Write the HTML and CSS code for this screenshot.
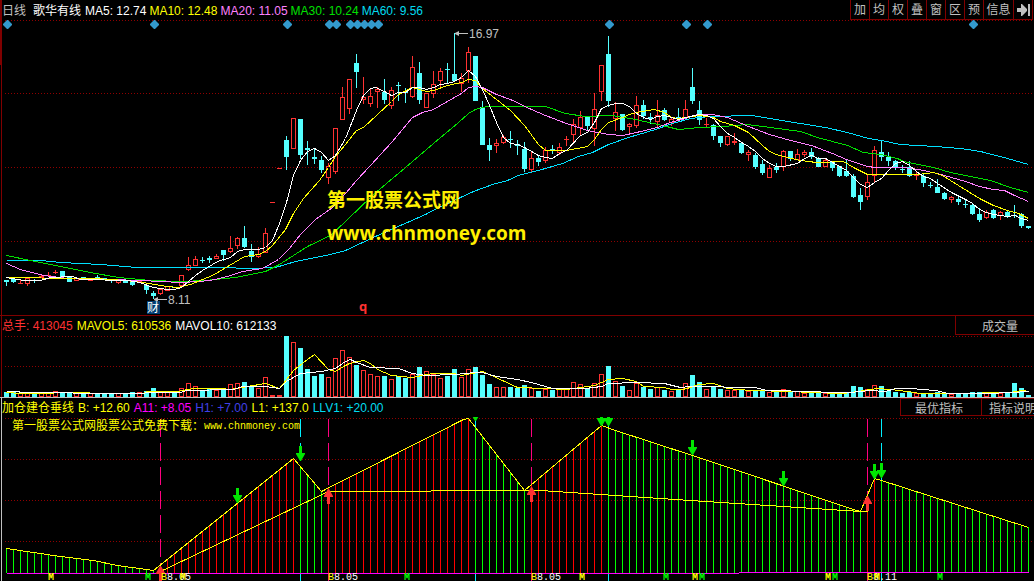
FILE: index.html
```html
<!DOCTYPE html>
<html lang="zh-CN">
<head>
<meta charset="utf-8">
<meta name="viewport" content="width=device-width, initial-scale=1">
<title>歌华有线 日线</title>
<link rel="stylesheet" href="styles.css">
</head>
<body>
<main class="terminal">
  <section class="panel panel-price">
    <header class="bar bar-price">
      <div class="legend">
        <span class="period">日线</span>
        <h1 class="stock white">歌华有线</h1>
        <span class="white">MA5: 12.74</span>
        <span class="yellow">MA10: 12.48</span>
        <span class="violet">MA20: 11.05</span>
        <span class="green">MA30: 10.24</span>
        <span class="cyan">MA60: 9.56</span>
      </div>
      <nav class="tools">
        <button type="button">加</button>
        <button type="button">均</button>
        <button type="button">权</button>
        <button type="button">叠</button>
        <button type="button">窗</button>
        <button type="button">区</button>
        <button type="button">预</button>
        <button type="button" class="wide">信息</button>
        <button type="button" aria-label="移到最后">
          <svg class="icon" viewBox="0 0 13 12" width="13" height="12"><path d="M0 4H4V0H5L10 5V7L5 12H4V8H0Z M11 0H13V12H11Z" fill="currentColor"/></svg>
        </button>
      </nav>
    </header>
    <svg class="chart" id="price" viewBox="0 20 1034 295" role="img" aria-label="K线图"></svg>
  </section>

  <section class="panel panel-volume">
    <header class="bar bar-volume">
      <div class="legend">
        <span class="red">总手: 413045</span>
        <span class="yellow">MAVOL5: 610536</span>
        <span class="white">MAVOL10: 612133</span>
      </div>
      <button type="button" class="tab tab-volume">成交量</button>
    </header>
    <svg class="chart" id="volume" viewBox="0 336 1034 61" role="img" aria-label="成交量图"></svg>
  </section>

  <section class="panel panel-signal">
    <header class="bar bar-signal">
      <div class="legend">
        <span class="yellow">加仓建仓垂线</span>
        <span class="yellow">B: +12.60</span>
        <span class="magenta">A11: +8.05</span>
        <span class="blue">H1: +7.00</span>
        <span class="yellow">L1: +137.0</span>
        <span class="cyan">LLV1: +20.00</span>
      </div>
      <div class="tabs">
        <button type="button" class="tab tab-best">最优指标</button>
        <button type="button" class="tab tab-help">指标说明</button>
      </div>
    </header>
    <svg class="chart" id="signal" viewBox="0 416 1034 165" role="img" aria-label="加仓建仓垂线图"></svg>
  </section>
</main>
<script src="chart.js"></script>
</body>
</html>
```

FILE: styles.css
```css
* { box-sizing: border-box; }

body {
  margin: 0;
  background: #000;
  color: #c0c0c0;
  font: 12px/18px "Liberation Sans", "Noto Sans CJK SC", sans-serif;
  overflow-x: hidden;
}

.terminal { display: flex; flex-direction: column; }

.panel { position: relative; overflow: hidden; }

.panel::before {
  content: "";
  position: absolute;
  left: 1px;
  top: 0;
  bottom: 0;
  width: 1px;
  background: #800000;
}

.panel-price::after {
  content: "";
  position: absolute;
  left: 0;
  top: 0;
  width: 1px;
  height: 65px;
  background: #800000;
}

.panel-price { border-bottom: 1px solid #800000; }
.panel-volume { border-bottom: 1px solid #c0c0c0; }
.panel-signal::before { background: #c0c0c0; }

.bar {
  display: flex;
  justify-content: space-between;
  white-space: nowrap;
}

.bar-price, .bar-volume { height: 20px; }
.bar-signal { height: 18px; }

.legend {
  display: flex;
  align-items: center;
  gap: 4px;
  padding-left: 2px;
}

.bar-price .legend { gap: 3px; padding-top: 1px; }
.bar-signal .legend { padding-top: 2px; }

.period { margin-right: 4px; }
.stock { margin: 0 1px 0 0; font: inherit; }

.white { color: #fff; }
.yellow { color: #ffff00; }
.violet { color: #ff80ff; }
.green { color: #00e000; }
.cyan { color: #00dcf0; }
.red { color: #ff3232; }
.magenta { color: #ff00ff; }
.blue { color: #4040e8; }

button {
  margin: 0;
  padding: 0;
  border: 0 solid #800000;
  background: #000;
  color: #c0c0c0;
  font: inherit;
  cursor: pointer;
}

.tools {
  display: flex;
  border-right: 1px solid #800000;
  margin-right: 1px;
}

.tools button {
  display: flex;
  align-items: center;
  justify-content: center;
  width: 19px;
  padding-top: 1px;
  border-width: 0 0 1px 1px;
}

.tools .wide { width: 30px; }

.tabs { display: flex; }

.tab-volume {
  width: 79px;
  height: 19px;
  padding: 2px 0 0 10px;
  border-width: 0 0 1px 1px;
}

.tab-best { width: 82px; border-width: 1px; padding: 1px 4px 0 0; }
.tab-help { width: 52px; padding: 1px 0 0 7px; border-width: 1px 0; text-align: left; overflow: hidden; }

.chart { display: block; width: 100%; height: auto; }
.chart text { font-family: "Liberation Sans", "Noto Sans CJK SC", sans-serif; font-size: 12px; }
.chart .watermark { font-family: "Noto Sans CJK SC", sans-serif; font-size: 19px; font-weight: 700; fill: #fff000; }
.chart .site { font-family: "Open Sans", sans-serif; font-size: 19px; font-weight: 700; fill: #fff000; }
.chart .quarter { font-family: "Open Sans", sans-serif; font-size: 13px; font-weight: 700; fill: #ff3232; }
.chart .mono { font-family: "Liberation Mono", monospace; font-size: 10px; }
.chart .mark { font-weight: 700; }
.chart .note { font-family: "Liberation Mono", "Noto Sans CJK SC", monospace; fill: #ffff00; }
```

FILE: chart.js
```js
const COLORS = { up: '#ff3232', down: '#54ffff', grid: '#900000' };
const SVG = 'http://www.w3.org/2000/svg';
const STEP = 7;
const column = i => 6 + STEP * i;

// direction, high, body top, body bottom, low, top of volume bar
const candles = `
d 280 280 282 286 392|d 278 279 282 283 392|u 280 283 284 284 393|u 278 278 284 286 393|d 279 280 281 283 393
u 275 276 278 278 393|u 272 275 276 277 393|u 270 272 273 274 391|d 271 271 277 277 392|d 277 277 282 282 392
u 278 278 281 281 393|d 277 277 280 280 393|u 278 278 281 281 393|d 275 277 279 279 393|d 278 278 280 280 393
d 279 279 281 283 393|u 280 280 283 284 393|d 280 280 283 283 393|d 281 281 285 286 392|u 279 281 283 283 392
d 284 285 290 294 391|d 291 293 296 299 388|u 289 289 294 295 392|u 286 286 291 291 392|d 287 287 288 288 392
u 275 275 286 286 388|u 257 265 270 271 383|u 256 259 266 266 386|d 257 260 261 263 390|d 256 258 260 263 389
u 254 256 259 259 390|d 250 250 255 261 389|u 236 248 252 253 384|u 237 238 246 249 383|d 226 238 247 248 382
d 244 251 257 262 386|u 247 254 257 258 388|u 228 233 253 253 377|u 202 202 203 203 395|u 168 168 169 169 395
d 136 140 157 170 336|u 118 118 149 149 342|d 119 119 155 159 348|d 141 148 150 165 369|d 149 157 159 164 376
d 156 160 170 173 374|u 163 166 178 184 377|u 128 128 172 174 358|u 87 97 120 120 350|u 79 79 109 114 357
d 54 63 72 88 365|u 77 97 100 104 370|u 88 96 104 107 374|u 87 89 92 108 376|d 79 92 100 104 376
u 87 90 106 109 379|d 82 85 86 101 376|d 88 91 93 103 378|u 56 67 97 98 374|d 62 73 100 104 367
u 93 93 108 108 371|u 71 84 94 98 374|u 68 71 81 88 378|d 63 69 70 84 376|d 33 74 81 82 369
u 73 78 84 92 377|u 47 52 71 83 369|d 56 56 101 101 367|d 101 107 145 145 375|d 138 145 150 161 384
u 139 143 146 153 387|u 135 137 143 144 387|d 131 139 140 148 387|d 140 144 146 155 388|d 142 149 169 172 385
u 152 158 170 172 388|d 155 158 162 166 391|u 147 150 161 163 389|d 145 149 150 154 390|u 143 147 153 155 389
u 136 139 140 146 389|u 119 124 135 142 382|u 111 117 128 136 384|d 116 116 126 131 388|u 93 109 129 146 383
u 65 65 92 101 374|d 36 54 101 107 366|u 102 112 119 131 381|d 114 114 130 131 386|u 123 124 127 134 390
u 96 105 126 128 383|d 100 105 116 119 387|d 113 117 119 124 389|u 100 115 122 128 387|d 108 110 120 121 390
u 118 119 123 126 391|d 108 117 119 119 390|u 100 109 118 118 383|d 68 87 101 104 375|d 101 110 120 125 382
u 118 124 125 127 389|d 124 125 136 140 387|d 136 136 143 147 389|u 136 136 145 146 390|u 133 141 143 145 390
d 142 143 153 154 390|u 150 152 155 161 391|d 153 155 167 169 391|d 160 164 173 175 391|u 165 168 178 178 392
d 163 167 170 173 391|u 150 151 167 171 389|d 151 151 159 161 391|u 149 154 160 160 391|u 150 152 155 157 393
d 148 152 157 159 393|d 157 158 167 167 393|u 158 160 167 167 393|d 162 162 168 171 393|d 166 166 176 177 393
d 159 171 176 177 393|d 174 176 197 198 386|d 188 195 202 210 387|u 175 182 197 200 389|u 146 150 176 182 385
d 140 152 157 161 386|d 152 157 161 166 391|d 160 161 167 170 392|d 165 169 170 173 393|d 161 167 176 177 392
u 172 175 176 180 393|d 174 176 183 187 393|d 182 185 186 188 393|d 179 187 193 193 392|d 192 193 199 200 393
u 196 197 200 203 394|d 196 199 202 205 393|d 199 204 205 208 393|d 203 205 214 215 392|d 208 214 220 222 392
u 210 212 218 219 393|d 209 210 218 219 393|u 211 212 216 220 393|d 210 212 217 218 393|d 205 215 216 218 383
d 213 214 226 228 388|d 226 226 228 229 395`
  .trim().split(/[|\n]/).map(row => {
    const [dir, ...n] = row.trim().split(' ');
    const [high, top, bottom, low, volume] = n.map(Number);
    return { dir, high, top, bottom, low, volume };
  });

const averages = [
  ['#00e0ff', '6,260 40,260 60,262 100,264 137,267 220,267 250,268 275,267 295,261 330,254 345,250 375,236 425,214 438,207 460,197 473,191 492,184 507,180 518,175 545,168 562,163 578,156 592,152 608,144 628,137 655,129 672,123 690,118 710,116 752,115 775,119 800,123 825,127 847,132 868,138 881,140 900,144 935,146 960,148 980,151 1007,158 1028,164'],
  ['#00e000', '6,255 30,260 60,266 90,272 118,277 150,280 180,281 205,280 235,277 265,271 279,264 293,255 307,246 330,235 345,221 373,194 405,167 433,143 458,122 468,113 475,109 482,107 488,106 545,106 565,113 585,116 612,115 635,119 662,125 678,129 690,128 697,127 723,126 747,124 770,127 800,131 817,137 847,145 863,152 880,154 897,158 903,161 933,167 950,172 990,180 1010,187 1028,192'],
  ['#ff80ff', '6,263 20,269 43,275 67,278 110,279 140,280 180,282 200,281 215,279 230,275 242,271 262,268 278,259 289,248 300,234 315,219 332,207 345,193 356,180 370,165 391,142 412,117 422,112 433,109 447,101 461,93 468,87 475,86 482,87 496,94 510,99 531,109 545,115 566,123 587,130 608,134 622,135 636,132 657,127 670,122 685,118 697,114 712,114 727,117 748,126 769,134 790,140 811,145 832,153 846,159 867,166 875,167 902,167 918,169 937,173 965,181 979,186 993,189 1004,190 1014,195 1028,201'],
  ['#ffff00', '6,277 75,278 95,278 125,280 142,282 167,286 177,287 190,284 202,279 212,275 229,265 244,256 258,254 265,251 272,245 285,229 293,213 303,198 319,180 328,167 335,156 345,144 356,130 363,127 391,101 398,94 412,87 426,91 433,90 447,85 461,82 468,79 475,80 482,88 496,99 510,110 524,125 538,144 545,150 566,150 587,146 594,139 601,129 608,122 622,117 629,114 636,112 654,109 664,112 671,117 678,118 699,115 713,117 720,121 734,125 748,132 762,145 769,151 776,154 783,156 800,160 816,162 843,161 853,167 867,174 918,174 933,172 942,175 958,185 979,198 993,205 1007,210 1018,213 1028,218'],
  ['#ffffff', '6,277 23,280 40,280 50,277 72,276 80,279 127,280 139,282 153,287 167,289 174,289 181,287 195,275 202,270 217,261 230,257 237,251 244,249 258,249 265,247 272,240 279,223 286,202 293,175 300,160 307,151 314,148 321,152 328,160 335,155 345,138 349,128 356,110 363,95 370,88 375,87 384,91 391,95 398,92 405,92 412,87 419,87 426,89 433,87 440,84 447,83 454,81 461,77 468,70 475,76 482,89 489,105 496,122 503,137 510,143 517,144 524,147 531,151 538,155 545,157 552,158 559,153 566,150 580,135 587,132 594,122 601,108 608,105 615,103 622,103 629,106 636,113 643,117 650,119 657,116 664,115 671,117 678,119 685,117 699,114 706,115 713,118 720,126 727,133 734,137 741,142 748,146 755,151 762,158 769,163 776,166 783,166 797,163 804,158 811,155 818,158 825,158 832,162 839,166 846,170 853,177 860,184 867,187 874,182 881,178 888,170 895,163 902,161 909,165 916,171 923,176 930,178 937,183 951,192 965,199 972,203 979,209 986,212 993,214 1000,215 1007,216 1014,215 1021,218 1028,220']
];

const volumeAverages = [
  ['#ffff00', '6,392 20,393 50,393 56,392 87,392 92,393 143,393 147,391 177,391 193,388 220,388 230,389 247,386 265,383 279,388 293,370 307,359 314,354 328,369 335,371 345,365 349,363 363,360 370,363 377,369 391,375 412,377 426,374 433,373 454,373 461,375 482,371 489,374 517,387 545,388 566,389 580,387 594,385 608,379 622,378 636,381 643,386 664,387 671,389 682,389 690,387 698,384 713,383 719,385 727,388 750,390 790,391 810,392 843,393 857,391 877,388 890,389 907,391 920,393 977,393 987,392 1010,392 1022,390 1028,391'],
  ['#ffffff', '6,391 17,391 21,392 70,392 75,393 140,393 150,392 180,392 186,390 233,389 242,386 265,386 279,388 286,381 293,377 300,373 321,371 335,368 345,361 350,359 356,362 370,367 398,368 412,373 426,375 454,374 475,372 482,372 496,376 517,379 531,382 545,386 552,388 585,388 601,386 608,383 636,382 664,383 680,387 690,386 755,387 766,390 815,391 825,392 850,392 870,390 885,391 895,388 910,388 935,390 948,393 985,393 1012,392 1028,391']
];

const zigzag = '6,548 60,556 93,560 117,565 153,570 293,458 321,491 463,419 468,418 524,490 601,425 615,430 692,455 853,509 860,511 874,478 881,480 1028,527';
const baseline = '162,570 328,491 430,491 431,490 540,490 690,500 860,511 867,511';

function add(parent, name, attrs, text) {
  const node = document.createElementNS(SVG, name);
  for (const key in attrs) node.setAttribute(key, attrs[key]);
  if (text) node.textContent = text;
  parent.append(node);
  return node;
}

const fill = (parent, x, y, width, height, color) =>
  add(parent, 'rect', { x, y, width, height, fill: color, 'shape-rendering': 'crispEdges' });

// Strokes run through pixel centres so that they stay one pixel wide.
const frame = (parent, x, y, width, height, color) =>
  add(parent, 'rect', { x: x + .5, y: y + .5, width: width - 1, height: height - 1, fill: '#000', stroke: color, 'shape-rendering': 'crispEdges' });

const line = (parent, points, color, dash = 'none') =>
  add(parent, 'polyline', { points, transform: 'translate(.5 .5)', fill: 'none', stroke: color, 'stroke-dasharray': dash, 'shape-rendering': 'crispEdges' });

const label = (parent, x, y, text, color, cls = '') =>
  add(parent, 'text', { x, y, fill: color, class: cls }, text);

function grid(parent, rows) {
  rows.forEach(y => line(parent, `4,${y} 1034,${y}`, COLORS.grid, '1 2'));
}

function box(parent, x, top, bottom, dir) {
  const height = bottom - top;
  if (dir === 'u' && height > 2) frame(parent, x - 2, top, 5, height, COLORS.up);
  else fill(parent, x - 2, top, 5, height, dir === 'u' ? COLORS.up : COLORS.down);
}

function drawPrice(svg) {
  grid(svg, [20, 93, 167, 241]);
  candles.forEach((c, i) => {
    fill(svg, column(i), c.high, 1, c.low - c.high, c.dir === 'u' ? COLORS.up : COLORS.down);
    box(svg, column(i), c.top, c.bottom, c.dir);
  });
  averages.forEach(([color, points]) => line(svg, points, color));
  [7, 154, 287, 329, 336, 350, 357, 364, 371, 378, 609, 686, 707, 973].forEach(x =>
    add(svg, 'path', { d: `M${x - 4} 24L${x} 20H${x + 1}L${x + 5} 24V25L${x + 1} 29H${x}L${x - 4} 25Z`, fill: '#3399cc' }));
  [[455, 33], [154, 299]].forEach(([x, y]) => {
    line(svg, `${x},${y} ${x + 12},${y}`, '#c0c0c0');
    add(svg, 'path', { d: `M${x} ${y}L${x + 4} ${y - 2}V${y + 3}L${x} ${y + 1}Z`, fill: '#c0c0c0' });
  });
  label(svg, 469, 38, '16.97', '#c0c0c0');
  label(svg, 168, 304, '8.11', '#c0c0c0');
  fill(svg, 147, 301, 13, 13, '#003c70');
  label(svg, 147, 312, '财', '#fff');
  label(svg, 359, 311, 'q', '#ff3232', 'quarter');
  label(svg, 327, 207, '第一股票公式网', '#fff000', 'watermark');
  label(svg, 327, 240, 'www.chnmoney.com', '#fff000', 'site');
}

function drawVolume(svg) {
  grid(svg, [336, 366]);
  candles.forEach((c, i) => box(svg, column(i), c.volume, 397, c.dir));
  volumeAverages.forEach(([color, points]) => line(svg, points, color));
}

function heightAt(points, x) {
  const nodes = points.split(' ').map(p => p.split(',').map(Number));
  const k = Math.max(1, nodes.findIndex(n => n[0] >= x));
  const [[x0, y0], [x1, y1]] = [nodes[k - 1], nodes[k]];
  return Math.round(y0 + (y1 - y0) * (x - x0) / (x1 - x0));
}

function drawSignal(svg) {
  const clip = add(svg, 'clipPath', { id: 'plot' });
  add(clip, 'rect', { x: 0, y: 417, width: 1034, height: 164 });
  grid(svg, [418, 459, 500, 541]);
  [160, 328, 531, 867].forEach(x => line(svg, `${x},418 ${x},581`, '#ff0080', '18 6'));
  [300, 475, 608, 881].forEach(x => line(svg, `${x},418 ${x},581`, '#00f0ff', '18 6'));
  const rising = [[22, 41], [46, 66], [75, 85], [123, 124]];
  candles.forEach((c, i) => {
    const y = heightAt(zigzag, column(i));
    const up = rising.some(([from, to]) => i >= from && i <= to);
    fill(svg, column(i), y, 1, 573 - y, up ? '#ff0000' : '#00ff00');
  });
  line(svg, '6,573 738,573', '#ff00ff');
  line(svg, '738,572 1028,572', '#ff00ff');
  line(svg, baseline, '#ffff00');
  line(svg, zigzag, '#ffff00');

  const marks = add(svg, 'g', { 'clip-path': 'url(#plot)' });
  [[237, 503], [300, 461], [475, 421], [601, 426], [608, 426], [692, 455], [783, 486], [874, 479], [881, 478]].forEach(([x, y]) =>
    add(marks, 'path', { d: `M${x} ${y}L${x - 4} ${y - 7}V${y - 8}H${x - 1}V${y - 15}H${x + 2}V${y - 8}H${x + 5}V${y - 7}L${x + 1} ${y}Z`, fill: '#00e600' }));
  [[160, 566], [328, 489], [531, 487], [867, 496]].forEach(([x, y]) =>
    add(marks, 'path', { d: `M${x} ${y}L${x - 4} ${y + 7}V${y + 8}H${x - 1}V${y + 15}H${x + 2}V${y + 8}H${x + 5}V${y + 7}L${x + 1} ${y}Z`, fill: '#ff3232' }));

  [[161, '8.05'], [328, '8.05'], [531, '8.05'], [867, '8.11']].forEach(([x, value]) => {
    label(svg, x, 580, 'B', '#ffff00', 'mono');
    label(svg, x + 6, 580, value, '#ffffff', 'mono');
  });
  [48, 180, 579, 692, 825, 874].forEach(x => label(svg, x, 580, 'M', '#ffff00', 'mono mark'));
  [145, 404, 663, 699, 832, 937].forEach(x => label(svg, x, 580, 'M', '#00ff00', 'mono mark'));

  label(svg, 12, 430, '第一股票公式网股票公式免费下载：', '#ffff00', 'note');
  label(svg, 204, 429, 'www.chnmoney.com', '#ffff00', 'mono');
}

drawPrice(document.getElementById('price'));
drawVolume(document.getElementById('volume'));
drawSignal(document.getElementById('signal'));
```
